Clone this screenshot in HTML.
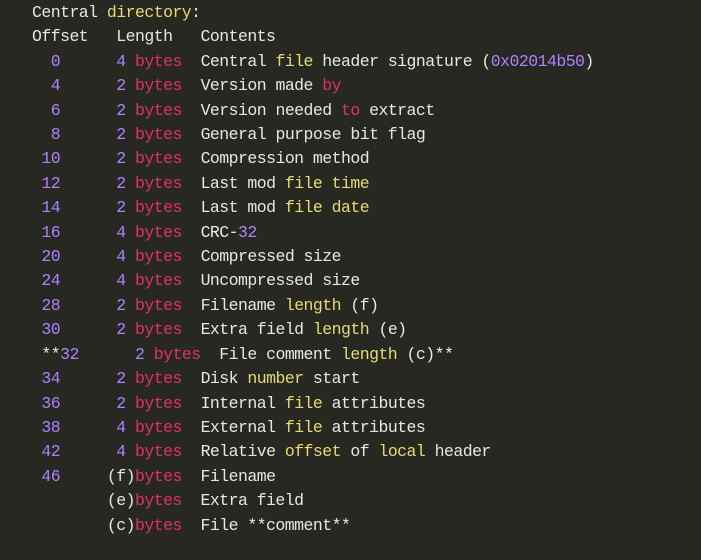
<!DOCTYPE html>
<html><head><meta charset="utf-8"><style>
html,body{margin:0;padding:0;background:#272822;width:701px;height:560px;overflow:hidden}
pre{margin:0;position:absolute;left:32px;top:1px;font-family:"Liberation Mono",monospace;font-size:16.5px;letter-spacing:-0.54px;line-height:24.4px;color:#e8e8e2}
.p{color:#ae81ff}.r{color:#e0306a}.y{color:#e6db74}
</style></head><body><pre>Central <span class="y">directory</span>:
Offset   Length   Contents
  <span class="p">0</span>      <span class="p">4</span> <span class="r">bytes</span>  Central <span class="y">file</span> header signature (<span class="p">0x02014b50</span>)
  <span class="p">4</span>      <span class="p">2</span> <span class="r">bytes</span>  Version made <span class="r">by</span>
  <span class="p">6</span>      <span class="p">2</span> <span class="r">bytes</span>  Version needed <span class="r">to</span> extract
  <span class="p">8</span>      <span class="p">2</span> <span class="r">bytes</span>  General purpose bit flag
 <span class="p">10</span>      <span class="p">2</span> <span class="r">bytes</span>  Compression method
 <span class="p">12</span>      <span class="p">2</span> <span class="r">bytes</span>  Last mod <span class="y">file</span> <span class="y">time</span>
 <span class="p">14</span>      <span class="p">2</span> <span class="r">bytes</span>  Last mod <span class="y">file</span> <span class="y">date</span>
 <span class="p">16</span>      <span class="p">4</span> <span class="r">bytes</span>  CRC-<span class="p">32</span>
 <span class="p">20</span>      <span class="p">4</span> <span class="r">bytes</span>  Compressed size
 <span class="p">24</span>      <span class="p">4</span> <span class="r">bytes</span>  Uncompressed size
 <span class="p">28</span>      <span class="p">2</span> <span class="r">bytes</span>  Filename <span class="y">length</span> (f)
 <span class="p">30</span>      <span class="p">2</span> <span class="r">bytes</span>  Extra field <span class="y">length</span> (e)
 **<span class="p">32</span>      <span class="p">2</span> <span class="r">bytes</span>  File comment <span class="y">length</span> (c)**
 <span class="p">34</span>      <span class="p">2</span> <span class="r">bytes</span>  Disk <span class="y">number</span> start
 <span class="p">36</span>      <span class="p">2</span> <span class="r">bytes</span>  Internal <span class="y">file</span> attributes
 <span class="p">38</span>      <span class="p">4</span> <span class="r">bytes</span>  External <span class="y">file</span> attributes
 <span class="p">42</span>      <span class="p">4</span> <span class="r">bytes</span>  Relative <span class="y">offset</span> of <span class="y">local</span> header
 <span class="p">46</span>     (f)<span class="r">bytes</span>  Filename
        (e)<span class="r">bytes</span>  Extra field
        (c)<span class="r">bytes</span>  File **comment**
</pre></body></html>
